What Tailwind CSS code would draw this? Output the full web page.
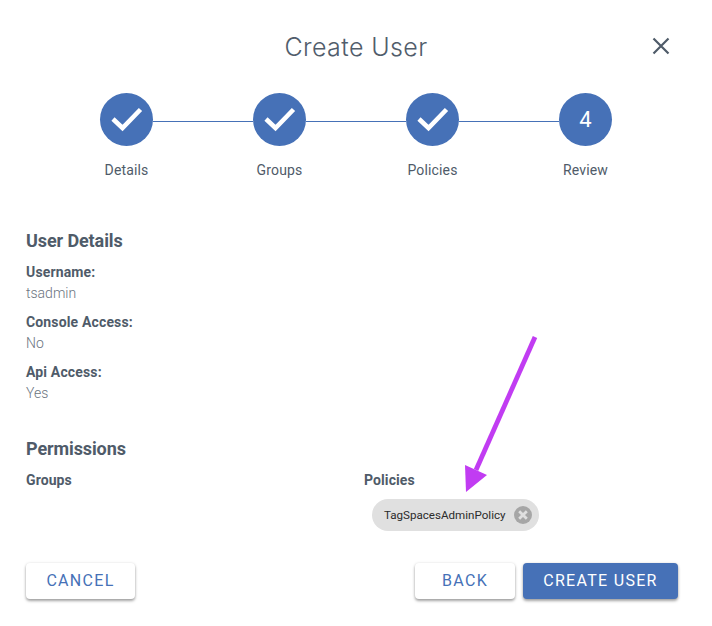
<!DOCTYPE html>
<html>
<head>
<meta charset="utf-8">
<script src="https://cdn.jsdelivr.net/npm/@tailwindcss/browser@4"></script>
</head>
<body class="bg-white">
<div class="relative w-[712px] h-[626px] overflow-hidden bg-white font-['Roboto',sans-serif] text-[#4f5b69]">
  <header class="relative h-[93px] pt-[31px] text-center">
    <h1 class="font-['Inter',sans-serif] font-light text-[25px] leading-[32px] tracking-[0.4px] text-[#515d6b]">Create User</h1>
    <button class="absolute left-[650px] top-[35px] w-[22px] h-[22px]" aria-label="Close">
      <svg viewBox="0 0 22 22" class="w-[22px] h-[22px]"><path d="M3.5 3.5 L18.5 18.5 M18.5 3.5 L3.5 18.5" stroke="#4f5b69" stroke-width="2.2" fill="none"/></svg>
    </button>
  </header>

  <section class="grid grid-cols-[repeat(4,153px)] ml-[50px] w-[612px]">
    <div class="relative flex flex-col items-center">
      <div class="absolute top-[28px] left-[103px] w-[100px] h-px bg-[#4671b7]"></div>
      <div class="w-[53px] h-[53px] rounded-full bg-[#4671b7] flex items-center justify-center">
        <svg viewBox="0 0 53 53" class="w-[53px] h-[53px]"><path d="M13 26 L22.5 35 L40.5 16.5" stroke="#fff" stroke-width="4.6" fill="none"/></svg>
      </div>
      <span class="mt-[14px] text-[14px] leading-[20px] tracking-[0.15px]">Details</span>
    </div>
    <div class="relative flex flex-col items-center">
      <div class="absolute top-[28px] left-[103px] w-[100px] h-px bg-[#4671b7]"></div>
      <div class="w-[53px] h-[53px] rounded-full bg-[#4671b7] flex items-center justify-center">
        <svg viewBox="0 0 53 53" class="w-[53px] h-[53px]"><path d="M13 26 L22.5 35 L40.5 16.5" stroke="#fff" stroke-width="4.6" fill="none"/></svg>
      </div>
      <span class="mt-[14px] text-[14px] leading-[20px] tracking-[0.15px]">Groups</span>
    </div>
    <div class="relative flex flex-col items-center">
      <div class="absolute top-[28px] left-[103px] w-[100px] h-px bg-[#4671b7]"></div>
      <div class="w-[53px] h-[53px] rounded-full bg-[#4671b7] flex items-center justify-center">
        <svg viewBox="0 0 53 53" class="w-[53px] h-[53px]"><path d="M13 26 L22.5 35 L40.5 16.5" stroke="#fff" stroke-width="4.6" fill="none"/></svg>
      </div>
      <span class="mt-[14px] text-[14px] leading-[20px] tracking-[0.15px]">Policies</span>
    </div>
    <div class="relative flex flex-col items-center">
      <div class="w-[53px] h-[53px] rounded-full bg-[#4671b7] flex items-center justify-center text-white text-[22px] leading-[53px]">4</div>
      <span class="mt-[14px] text-[14px] leading-[20px] tracking-[0.15px]">Review</span>
    </div>
  </section>

  <section class="px-[26px] mt-[49px]">
    <h2 class="text-[18px] leading-[24px] font-bold tracking-[-0.1px]">User Details</h2>
    <dl class="mt-[9px] text-[14px] leading-[20px]">
      <dt class="font-bold tracking-[0.15px]">Username:</dt>
      <dd class="mt-[1px] text-[#6b7480] font-light">tsadmin</dd>
      <dt class="mt-[9px] font-bold tracking-[0.15px]">Console Access:</dt>
      <dd class="mt-[1px] text-[#6b7480] font-light">No</dd>
      <dt class="mt-[9px] font-bold tracking-[0.15px]">Api Access:</dt>
      <dd class="mt-[1px] text-[#6b7480] font-light">Yes</dd>
    </dl>

    <h2 class="mt-[34px] text-[18px] leading-[24px] font-bold tracking-[-0.1px]">Permissions</h2>
    <div class="mt-[9px] grid grid-cols-[338px_1fr] text-[14px] leading-[20px] font-bold tracking-[0.1px]">
      <div>Groups</div>
      <div>
        <div>Policies</div>
        <div class="mt-[9px] ml-[8px] inline-flex items-center h-[32px] w-[167px] rounded-full bg-[#e0e0e0] pl-[12px] pr-[7px] justify-between font-normal text-[11.6px] tracking-normal text-[#2b2b2b]">
          <span>TagSpacesAdminPolicy</span>
          <svg viewBox="0 0 18 18" class="w-[18px] h-[18px]"><circle cx="9" cy="9" r="9" fill="#a6a6a6"/><path d="M5.2 5.2 L12.8 12.8 M12.8 5.2 L5.2 12.8" stroke="#e0e0e0" stroke-width="2.8"/></svg>
        </div>
      </div>
    </div>
  </section>

  <footer class="pl-[26px] pr-[34px] mt-[32px] flex justify-between text-[16px] tracking-[1.3px]">
    <button class="w-[109px] h-[36px] rounded bg-white text-[#4671b7] shadow-[0_2px_3px_rgba(0,0,0,0.35),0_0_3px_rgba(0,0,0,0.1)]">CANCEL</button>
    <div class="flex gap-[8px]">
      <button class="w-[100px] h-[36px] rounded bg-white text-[#4671b7] shadow-[0_2px_3px_rgba(0,0,0,0.35),0_0_3px_rgba(0,0,0,0.1)]">BACK</button>
      <button class="w-[155px] h-[36px] rounded bg-[#4671b7] text-white shadow-[0_2px_3px_rgba(0,0,0,0.35),0_0_3px_rgba(0,0,0,0.1)]">CREATE USER</button>
    </div>
  </footer>

  <svg class="absolute left-[460px] top-[335px] w-[80px] h-[160px]" viewBox="0 0 80 160">
    <path d="M75 2 L16 135" stroke="#c13cf2" stroke-width="4.8" fill="none"/>
    <path d="M6 157 L5 130 L27 140 Z" fill="#c13cf2"/>
  </svg>
</div>
</body>
</html>
